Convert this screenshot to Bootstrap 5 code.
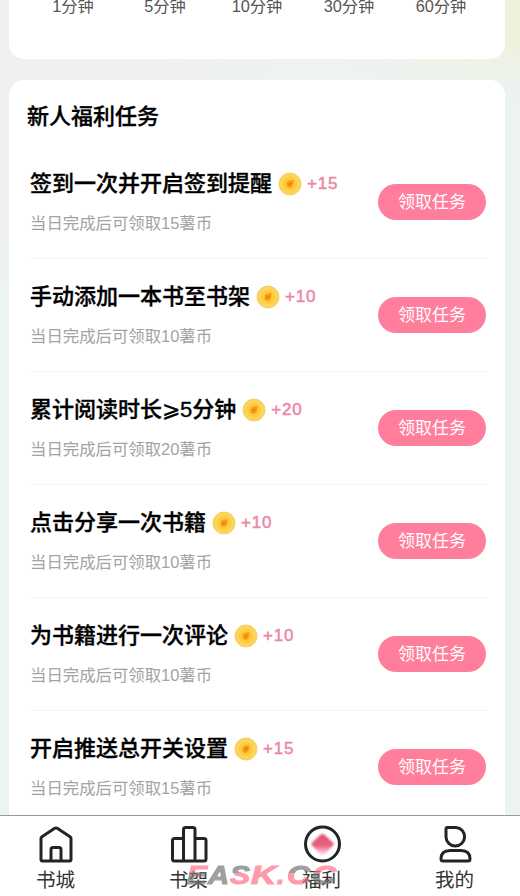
<!DOCTYPE html>
<html lang="zh-CN">
<head>
<meta charset="utf-8">
<meta name="viewport" content="width=device-width, initial-scale=1">
<title>新人福利任务</title>
<link href="https://cdn.jsdelivr.net/npm/bootstrap@5.3.0/dist/css/bootstrap.min.css" rel="stylesheet">
<style>
body{font-family:"Liberation Sans","Noto Sans CJK SC",sans-serif;height:896px;color:#000;
background:radial-gradient(ellipse 230px 100px at 520px 0,#f0f1da 30%,transparent),radial-gradient(ellipse 330px 330px at 0 0,#f1eef0 20%,transparent),#edf3f3}
.panel{margin:0 15px 0 9px;background:#fff}
.times{height:59px;border-radius:0 0 15px 15px;padding:0 18px;font-size:16.3px;line-height:20px;color:#555}
.times span{width:92px;margin-top:-4px}
.tasks{margin-top:21px;height:735px;border-radius:15px 15px 0 0;padding:0 17px 0 18px}
.tasks h1{font-size:22px;line-height:30px;font-weight:500;padding-top:22px;margin:0 0 14px}
.task{height:113px;margin-left:2px;padding-left:1px;border-bottom:1px solid #f5f5f5}
.task h2{font-size:22px;line-height:30px;font-weight:500;margin:23px 0 0}
.tasks h1,.task h2{-webkit-text-stroke:.35px #000}
.task p{font-size:16.4px;line-height:22px;color:#a3a3a3;margin:13px 0 0}
.plus{font-size:17px;line-height:22px;color:#ee87a5;letter-spacing:.75px;-webkit-text-stroke:.5px #ee87a5;margin-bottom:4px}
.coin{width:24px;height:24px;margin:0 5px 3px 6px}
.claim{width:108px;height:36px;margin:38px 2px 0 0;border-radius:18px;background:#ff7e9b;color:#fff;font-size:17px;line-height:37px;padding:0;border:0}
.tabs{height:81px;background:#fff;border-top:1px solid #999;margin-left:-11px}
.tabs a{width:133px;flex:none;color:#333;font-size:19.5px;line-height:24px}
.tabs a svg{width:40px;height:40px;margin:8px 0 4px;fill:none;stroke:#242424;stroke-width:3;stroke-linejoin:round}
.wm{left:180px;top:857px;font:italic bold 26px "Liberation Sans",sans-serif;pointer-events:none}
</style>
</head>
<body class="overflow-hidden position-relative">
<section class="panel times d-flex text-center">
<span>1分钟</span><span>5分钟</span><span>10分钟</span><span>30分钟</span><span>60分钟</span>
</section>
<main class="panel tasks overflow-hidden" id="tasks"><h1>新人福利任务</h1></main>
<nav class="tabs d-flex">
<a class="d-flex flex-column align-items-center text-decoration-none"><svg viewBox="0 0 40 40"><path d="M5 14.5Q5 13.5 6 12.7L18.7 4.3Q20 3.5 21.3 4.3L34 12.7Q35 13.5 35 14.5V35.5Q35 37 33.5 37H6.500Q5 37 5 35.500ZM15 37V25.500Q15 23.500 17 23.500H23Q25 23.500 25 25.500V37"/></svg>书城</a>
<a class="d-flex flex-column align-items-center text-decoration-none"><svg viewBox="0 0 40 40"><path d="M14.500 37V5.500Q14.500 3.500 16.500 3.500H24Q26 3.500 26 5.500V37M14.500 14.500H5.500Q3.500 14.500 3.500 16.500V35Q3.500 37 5.500 37H35Q37 37 37 35V16.500Q37 14.500 35 14.500H26"/></svg>书架</a>
<a class="d-flex flex-column align-items-center text-decoration-none"><svg viewBox="0 0 40 40"><defs><linearGradient id="dg" x2="0" y2="1"><stop stop-color="#df5375"/><stop offset=".55" stop-color="#e8617f"/><stop offset="1" stop-color="#ff9eb2" stop-opacity=".35"/></linearGradient><filter id="soft"><feGaussianBlur stdDeviation="1"/></filter></defs><circle cx="20.500" cy="20" r="17"/><path stroke="none" fill="url(#dg)" filter="url(#soft)" d="M18.500 10.800Q20.500 9 22.500 10.800L31 18.500Q32.500 20 31 21.500L22.500 30.500Q20.500 32 18.500 30.500L10 21.500Q8.500 20 10 18.500Z"/></svg>福利</a>
<a class="d-flex flex-column align-items-center text-decoration-none"><svg viewBox="0 0 40 40"><path d="M12.500 3.500H21A9.300 9.300 0 1 1 11 13V5Q11 3.500 12.500 3.500ZM15 26.500H26Q35 26.500 35 35Q35 37 33 37H8Q6 37 6 35Q6 26.500 15 26.500Z"/></svg>我的</a>
</nav>
<svg class="wm position-absolute" width="165" height="32" viewBox="0 0 165 32" opacity=".7">
<defs><linearGradient id="pg" gradientUnits="userSpaceOnUse" x1="0" x2="0" y1="0" y2="32"><stop offset=".5" stop-color="#ff7188"/><stop offset=".5" stop-color="#777"/></linearGradient>
<linearGradient id="gp" gradientUnits="userSpaceOnUse" x1="0" x2="0" y1="0" y2="32"><stop offset=".5" stop-color="#777"/><stop offset=".5" stop-color="#ff7188"/></linearGradient></defs>
<g stroke-width="1.200">
<text x="7" y="26.500" textLength="20" lengthAdjust="spacingAndGlyphs" fill="url(#pg)" stroke="url(#pg)">E</text>
<text x="28" y="26.500" textLength="21" lengthAdjust="spacingAndGlyphs" fill="#777" stroke="#777">A</text>
<text x="50" y="26.500" textLength="20" lengthAdjust="spacingAndGlyphs" fill="url(#gp)" stroke="url(#gp)">S</text>
<text x="71" y="26.500" textLength="25" lengthAdjust="spacingAndGlyphs" fill="#ff7188" stroke="#ff7188">K</text>
<text x="97" y="26.500" fill="#ff7188" stroke="#ff7188">.</text>
<text x="107" y="26.500" textLength="23" lengthAdjust="spacingAndGlyphs" fill="url(#gp)" stroke="url(#gp)">C</text>
<text x="132" y="26.500" textLength="24" lengthAdjust="spacingAndGlyphs" fill="url(#pg)" stroke="url(#pg)">C</text>
</g>
</svg>
<script src="https://cdn.jsdelivr.net/npm/bootstrap@5.3.0/dist/js/bootstrap.bundle.min.js"></script>
<script>
const tasks = [["签到一次并开启签到提醒",15],["手动添加一本书至书架",10],["累计阅读时长⩾5分钟",20],["点击分享一次书籍",10],["为书籍进行一次评论",10],["开启推送总开关设置",15]];
tasks.forEach(([t,n])=>{
document.getElementById("tasks").insertAdjacentHTML("beforeend",`<div class="task d-flex justify-content-between align-items-start"><div><div class="d-flex align-items-end"><h2>${t}</h2><svg class="coin" viewBox="0 0 24 24"><circle cx="12" cy="12" r="11" fill="#fbd45c" stroke="#f8cc62"/><circle cx="12" cy="12" r="7" fill="#ffcb38"/><path d="M8.500 12.500Q8.500 8.500 12.500 8.500L15.500 8Q16 15.500 11.500 16Q8.500 15.500 8.500 12.500Z" fill="#f89b18"/><path d="M10.500 13L13.500 11" stroke="#d97b18" stroke-width="1.200"/></svg><span class="plus">+${n}</span></div><p>当日完成后可领取${n}薯币</p></div><button class="btn claim">领取任务</button></div>`)})
</script>
</body>
</html>
